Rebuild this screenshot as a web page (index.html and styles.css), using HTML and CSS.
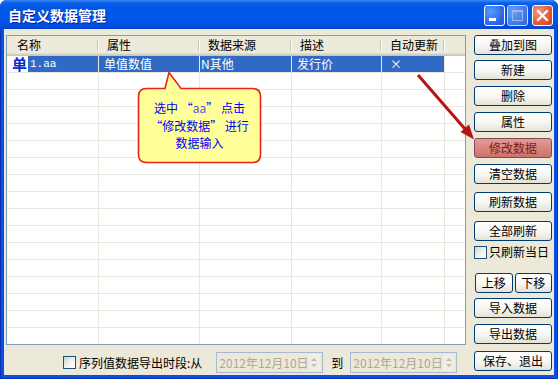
FILE: index.html
```html
<!DOCTYPE html>
<html lang="zh-CN">

<head>
  <meta charset="UTF-8" />
  <meta name="viewport" content="width=device-width, initial-scale=1.0" />
  <title>自定义数据管理</title>
  <link rel="stylesheet" href="styles.css">
</head>

<body>
  <div class="ventana">
    <div class="titulo">
      <span class="titulo-texto">自定义数据管理</span>
      <div class="controles">
        <span class="cap cap-min">
          <svg width="19" height="19" viewBox="0 0 19 19"><rect x="4" y="12" width="7" height="3" fill="#fff" /></svg>
        </span>
        <span class="cap cap-max">
          <svg width="19" height="19" viewBox="0 0 19 19">
            <rect x="4.5" y="4.5" width="10" height="10" fill="none" stroke="#9db8ee" />
            <rect x="4" y="4" width="11" height="2" fill="#9db8ee" />
          </svg>
        </span>
        <span class="cap cap-cerrar">
          <svg width="19" height="19" viewBox="0 0 19 19">
            <path d="M5 5 L14 14 M14 5 L5 14" stroke="#fff" stroke-width="2.2" stroke-linecap="square" />
          </svg>
        </span>
      </div>
    </div>

    <div class="cliente">
      <div class="izquierda">
        <div class="lista">
          <div class="lista-cabecera">
            <div class="col col-nombre">名称</div>
            <div class="col">属性</div>
            <div class="col">数据来源</div>
            <div class="col">描述</div>
            <div class="col">自动更新</div>
            <div class="col col-relleno"></div>
          </div>
          <div class="lista-cuerpo">
            <div class="fila seleccionada">
              <div class="celda celda-nombre"><span class="icono">单</span><span class="marca">1.aa</span></div>
              <div class="celda">单值数值</div>
              <div class="celda celda-fuente">N其他</div>
              <div class="celda">发行价</div>
              <div class="celda celda-auto">×</div>
              <div class="celda"></div>
            </div>
            <div class="fila"><i></i><i></i><i></i><i></i><i></i><i></i></div>
            <div class="fila"><i></i><i></i><i></i><i></i><i></i><i></i></div>
            <div class="fila"><i></i><i></i><i></i><i></i><i></i><i></i></div>
            <div class="fila"><i></i><i></i><i></i><i></i><i></i><i></i></div>
            <div class="fila"><i></i><i></i><i></i><i></i><i></i><i></i></div>
            <div class="fila"><i></i><i></i><i></i><i></i><i></i><i></i></div>
            <div class="fila"><i></i><i></i><i></i><i></i><i></i><i></i></div>
            <div class="fila"><i></i><i></i><i></i><i></i><i></i><i></i></div>
            <div class="fila"><i></i><i></i><i></i><i></i><i></i><i></i></div>
            <div class="fila"><i></i><i></i><i></i><i></i><i></i><i></i></div>
            <div class="fila"><i></i><i></i><i></i><i></i><i></i><i></i></div>
            <div class="fila"><i></i><i></i><i></i><i></i><i></i><i></i></div>
            <div class="fila"><i></i><i></i><i></i><i></i><i></i><i></i></div>
            <div class="fila"><i></i><i></i><i></i><i></i><i></i><i></i></div>
            <div class="fila"><i></i><i></i><i></i><i></i><i></i><i></i></div>
            <div class="fila"><i></i><i></i><i></i><i></i><i></i><i></i></div>
          </div>
        </div>

        <div class="exportar">
          <span class="check"></span>
          <span class="exportar-texto">序列值数据导出时段:从</span>
          <div class="fecha">
            <span class="fecha-texto">2012年12月10日</span>
            <span class="giro"><span class="flecha-arriba"></span><span class="flecha-abajo"></span></span>
          </div>
          <span class="hasta">到</span>
          <div class="fecha fecha-fin">
            <span class="fecha-texto">2012年12月10日</span>
            <span class="giro"><span class="flecha-arriba"></span><span class="flecha-abajo"></span></span>
          </div>
        </div>
      </div>

      <div class="botones">
        <button class="btn">叠加到图</button>
        <button class="btn mt5">新建</button>
        <button class="btn mt6">删除</button>
        <button class="btn mt6">属性</button>
        <button class="btn btn-rojo mt6">修改数据</button>
        <button class="btn mt6">清空数据</button>
        <button class="btn mt8">刷新数据</button>
        <button class="btn mt9">全部刷新</button>
        <label class="solo-hoy"><span class="check"></span>只刷新当日</label>
        <div class="par">
          <button class="btn">上移</button>
          <button class="btn">下移</button>
        </div>
        <button class="btn mt5">导入数据</button>
        <button class="btn mt6">导出数据</button>
        <button class="btn mt7">保存、退出</button>
      </div>
    </div>

    <svg class="capa" width="558" height="379" viewBox="0 0 558 379">
      <path d="M146.5 88.5 H165 L169 72.5 L181 88.5 H252.5 Q260.5 88.5 260.5 96.5 V154.5 Q260.5 162.5 252.5 162.5 H146.5 Q138.5 162.5 138.5 154.5 V96.5 Q138.5 88.5 146.5 88.5 Z"
        fill="#ffff99" stroke="#e8231c" stroke-width="1.6" />
      <line x1="418" y1="75" x2="465" y2="129" stroke="#b81414" stroke-width="3" />
      <polygon points="474,139.5 460.5,132 469,124.5" fill="#b81414" />
    </svg>
    <div class="nota">
      <p>选中 “<span class="aa">aa</span>” 点击</p>
      <p>“修改数据” 进行</p>
      <p>数据输入</p>
    </div>
  </div>
</body>

</html>
```

FILE: styles.css
```css
:root {
  --fondo: #ece9d8;
  --rejilla: #ebe9dd;
  --seleccion: #316ac5;
  --borde-lista: #7f9db9;
  --borde-boton: #003c74;
  --fuente: "Noto Sans CJK SC", "DejaVu Sans", sans-serif;
}

* {
  margin: 0;
  padding: 0;
  box-sizing: border-box;
}

body {
  width: 558px;
  height: 379px;
  overflow: hidden;
  font-family: var(--fuente);
  font-size: 12px;
  color: #000;
  background: #fff;
}

.ventana {
  position: relative;
  width: 558px;
  height: 379px;
  display: flex;
  flex-direction: column;
  background: #0b4fe0;
  border-radius: 7px 7px 0 0;
  box-shadow: inset 1px 0 #0831b8, inset -1px 0 #0831b8, inset 0 -1px #0831b8;
}

/* barra de titulo */
.titulo {
  height: 29px;
  display: flex;
  align-items: center;
  justify-content: space-between;
  padding: 0 5px 0 8px;
  border-radius: 7px 7px 0 0;
  background: linear-gradient(#3d8bf7 0, #0a5ee8 3px, #0057e6 8px, #0058ec 18px, #0050e0 25px, #0044cf 29px);
}

.titulo-texto {
  color: #fff;
  font-size: 14px;
  font-weight: bold;
  line-height: 18px;
  text-shadow: 1px 1px #0a1f9c;
  margin-top: 1px;
}

.controles {
  display: flex;
  align-items: center;
  margin-top: 2px;
}

.cap {
  width: 21px;
  height: 21px;
  border: 1px solid #fff;
  border-radius: 3px;
  display: flex;
  background: radial-gradient(circle at 30% 30%, #5b9cff, #2663e8 70%, #1d55d8);
}

.cap-max {
  margin-left: 2px;
  border-color: #c8d8fa;
  background: radial-gradient(circle at 30% 30%, #6aa2f8, #3a74e6 70%, #2f66d8);
}

.cap-cerrar {
  margin-left: 4px;
  background: radial-gradient(circle at 30% 30%, #f39a7c, #e35a32 60%, #c8411d);
}

/* zona cliente */
.cliente {
  flex: 1;
  display: flex;
  margin: 0 4px 4px;
  padding: 6px 0 0 2px;
  background: var(--fondo);
}

.izquierda {
  width: 460px;
  display: flex;
  flex-direction: column;
}

.lista {
  height: 310px;
  border: 1px solid var(--borde-lista);
  background: #fff;
  overflow: hidden;
}

.lista-cabecera,
.fila {
  display: grid;
  grid-template-columns: 92px 101px 92px 90px 63px 1fr;
}

.lista-cabecera {
  height: 20px;
  background: linear-gradient(#ebeadb 0 17px, #e2decd 17px 18px, #d6d2c2 18px 19px, #cbc7b8 19px 20px);
}

.col {
  line-height: 17px;
  padding-left: 8px;
  white-space: nowrap;
  background:
    linear-gradient(#c7c5b2, #c7c5b2) no-repeat right 1px top 3px / 1px 12px,
    linear-gradient(#fff, #fff) no-repeat right 0 top 3px / 1px 12px;
}

.col-nombre {
  padding-left: 10px;
}

.col-relleno {
  background: none;
}

.fila {
  height: 17px;
}

.fila > *,
.fila i {
  border-right: 1px solid var(--rejilla);
  border-bottom: 1px solid var(--rejilla);
}

.fila > :last-child {
  border-right: none;
}

.celda {
  line-height: 16px;
  padding-left: 5px;
  white-space: nowrap;
}

.seleccionada .celda {
  background: var(--seleccion);
  color: #fff;
}

.seleccionada .celda:last-child {
  background: #fff;
}

.seleccionada .celda-nombre {
  display: flex;
  padding-left: 0;
  background: #fff;
}

.icono {
  width: 21px;
  padding-left: 5px;
  color: #0a28d8;
  font-size: 15px;
  font-weight: bold;
  line-height: 16px;
}

.marca {
  flex: 1;
  padding-left: 2px;
  background: var(--seleccion);
  color: #fff;
  font-family: "Liberation Mono", monospace;
  font-size: 11px;
}

.celda-fuente {
  padding-left: 1px;
}

.celda-auto {
  padding-left: 8px;
}

/* barra inferior */
.exportar {
  height: 21px;
  margin-top: 7px;
  padding-left: 57px;
  display: flex;
  align-items: center;
}

.check {
  width: 13px;
  height: 13px;
  flex-shrink: 0;
  border: 1px solid #1c5180;
  background: linear-gradient(135deg, #d4d4cf, #f4f4f0 60%, #fff);
}

.exportar-texto {
  margin-left: 3px;
  line-height: 16px;
  white-space: nowrap;
}

.fecha {
  width: 107px;
  height: 21px;
  margin-left: 14px;
  display: flex;
  align-items: center;
  justify-content: space-between;
  border: 1px solid #a7bad2;
  background: var(--fondo);
  padding: 1px 2px 1px 2px;
}

.fecha-fin {
  margin-left: 7px;
}

.fecha-texto {
  color: #aca899;
  line-height: 16px;
  white-space: nowrap;
}

.giro {
  width: 14px;
  height: 17px;
  display: flex;
  flex-direction: column;
  align-items: center;
  justify-content: center;
  gap: 3px;
  background: #f0efe6;
  border-radius: 2px;
}

.flecha-arriba,
.flecha-abajo {
  width: 0;
  height: 0;
  border-left: 3px solid transparent;
  border-right: 3px solid transparent;
}

.flecha-arriba {
  border-bottom: 3px solid #c2bfb1;
}

.flecha-abajo {
  border-top: 3px solid #c2bfb1;
}

.hasta {
  margin-left: 8px;
  line-height: 16px;
}

/* botones */
.botones {
  width: 78px;
  margin-left: 8px;
  display: flex;
  flex-direction: column;
}

.btn {
  height: 20px;
  flex-shrink: 0;
  border: 1px solid var(--borde-boton);
  border-radius: 3px;
  background: linear-gradient(#fff, #f7f6f1 55%, #e4e2d8);
  font-family: var(--fuente);
  font-size: 12px;
  line-height: 16px;
  color: #000;
}

.btn-rojo {
  background: linear-gradient(#e49a96, #d98480 55%, #cd706c);
  border-color: #7b4a5c;
  color: #7a1f1f;
}

.mt5 { margin-top: 5px; }
.mt6 { margin-top: 6px; }
.mt7 { margin-top: 7px; }
.mt8 { margin-top: 8px; }
.mt9 { margin-top: 9px; }

.solo-hoy {
  height: 14px;
  margin-top: 4px;
  display: flex;
  align-items: center;
  gap: 2px;
  white-space: nowrap;
  line-height: 14px;
}

.par {
  margin-top: 14px;
  display: flex;
  gap: 2px;
  padding-left: 1px;
}

.par .btn {
  flex: 1;
}

/* nota y flecha encima */
.capa {
  position: absolute;
  top: 0;
  left: 0;
  pointer-events: none;
}

.nota {
  position: absolute;
  left: 138px;
  top: 99px;
  width: 123px;
  text-align: center;
  color: #0000ff;
  font-size: 12px;
  line-height: 17.5px;
}

.aa {
  color: #5a4fe0;
}
```
